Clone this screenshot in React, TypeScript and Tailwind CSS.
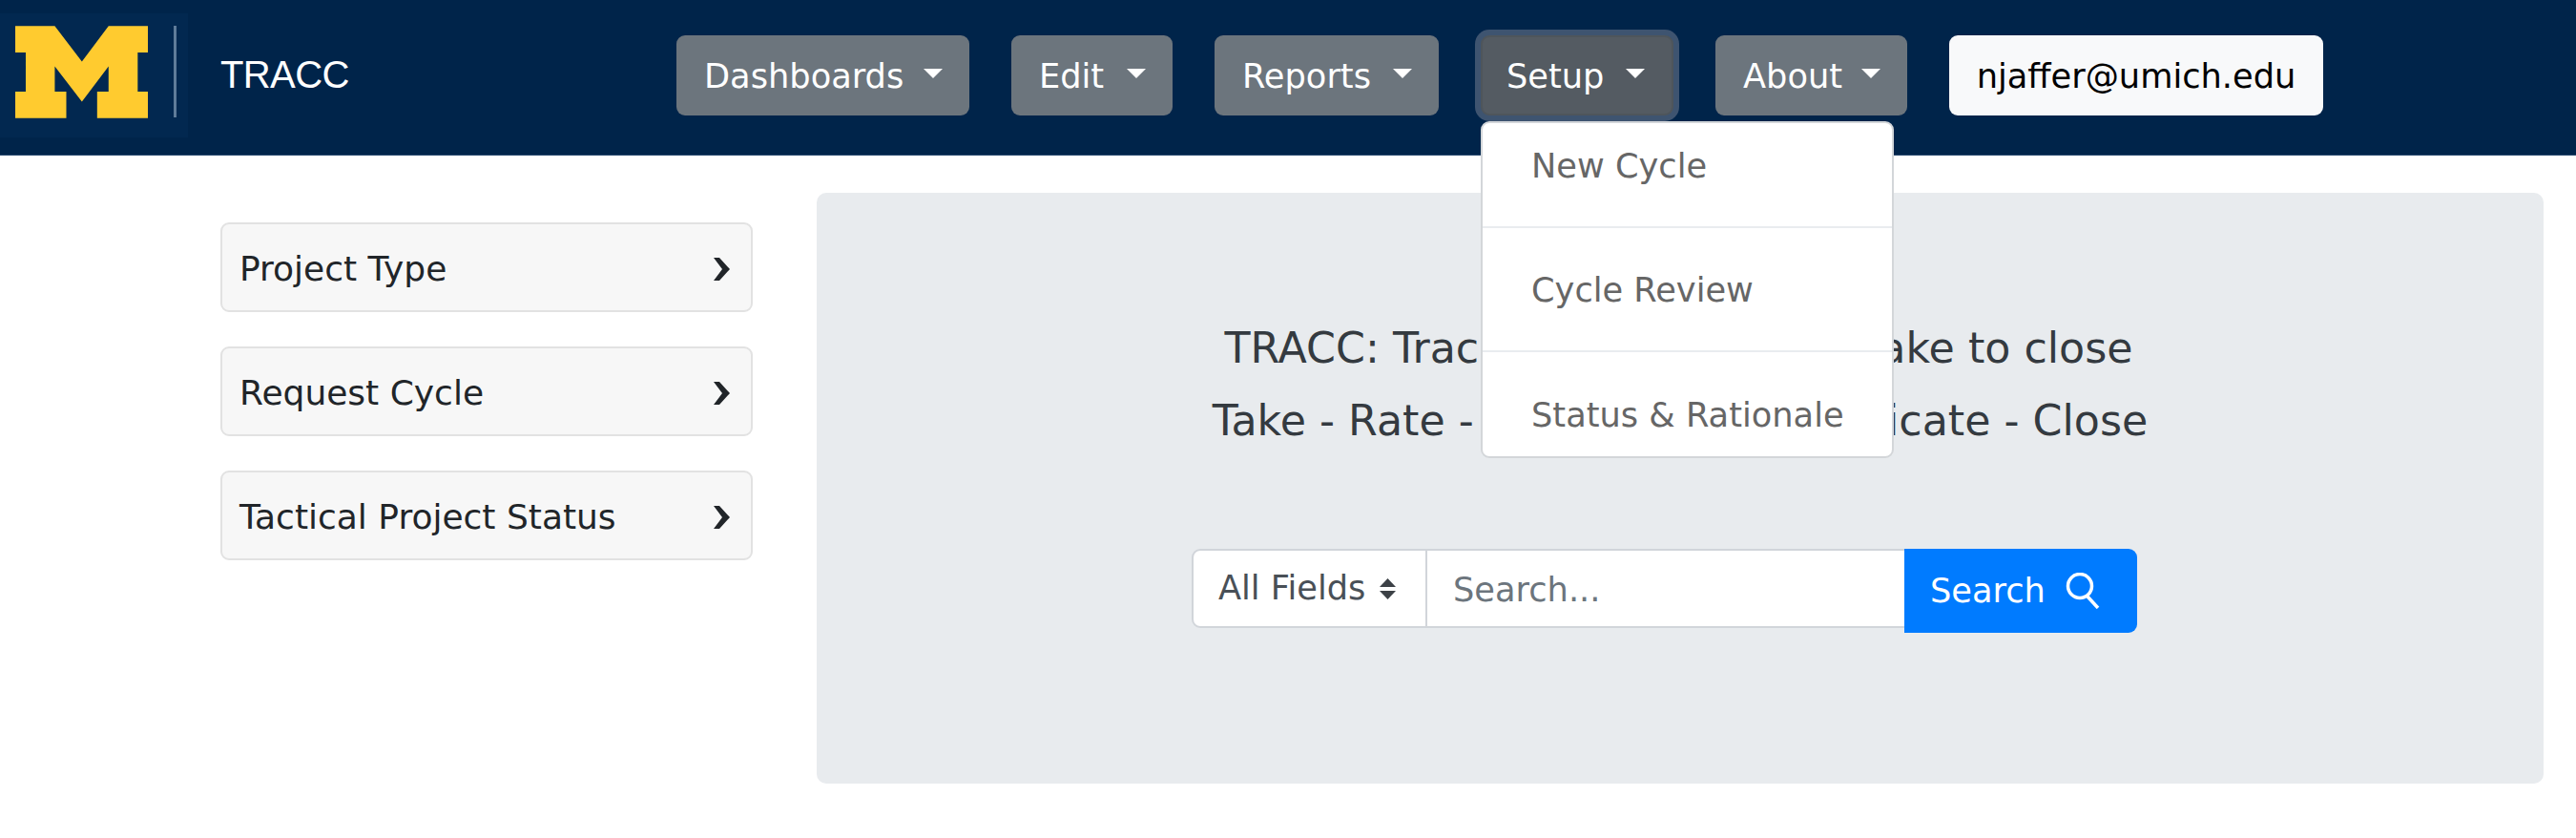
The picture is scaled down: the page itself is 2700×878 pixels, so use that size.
const font = "font-['DejaVu_Sans',sans-serif]";

const Caret = () => (
  <svg width="20" height="10" viewBox="0 0 20 10" className="mb-[7px] shrink-0">
    <polygon points="0,0 20,0 10,10" fill="currentColor" />
  </svg>
);

const NavButton = ({
  label,
  width,
  active,
}: {
  label: string;
  width: string;
  active?: boolean;
}) => (
  <div
    className={`flex items-center justify-between h-[84px] rounded-[9px] pt-[2px] pr-[28px] text-white ${width} ${
      active
        ? "pl-[25px] bg-[#545b62] border-2 border-[#4e555b] shadow-[0_0_0_6px_#3e5470]"
        : "pl-[29px] bg-[#6c757d]"
    }`}
  >
    {label}
    <Caret />
  </div>
);

const SideItem = ({ label }: { label: string }) => (
  <div className="flex items-center justify-between h-[94px] pl-[18px] pr-[22px] pt-[4px] text-[36px] bg-[#f7f7f7] border-2 border-[#e2e2e2] rounded-[9px] text-[#212529]">
    {label}
    <svg width="17" height="24" viewBox="0 0 17 24">
      <polygon points="0,0 6,0 17,12 6,24 0,24 9,12" fill="#212529" />
    </svg>
  </div>
);

export default function App() {
  return (
    <div className={`${font} text-[35.2px] min-h-[878px] bg-white`}>
      <header className="flex items-center h-[163px] pb-[4px] bg-[#00244a] border-b border-[#2a4a70]">
        <div className="flex items-start shrink-0 w-[197px] h-[130px] pl-[16px] pt-[13px] bg-[#022850]">
          <svg width="139" height="97" viewBox="0 0 139.3 96.7">
            <polygon
              points="0,0 41.5,0 70,37.3 98,0 139.3,0 139.3,27.7 128.6,27.7 128.6,69 139.3,69 139.3,96.7 86,96.7 86,69 98,69 98,42.3 70,79.3 41.5,42.3 41.5,69 53.6,69 53.6,96.7 0,96.7 0,69 11,69 11,27.7 0,27.7"
              fill="#ffcb2f"
            />
          </svg>
          <div className="ml-[27px] w-[3px] h-[96px] bg-[#5f7c99]" />
        </div>
        <div className="ml-[34px] mb-[3px] w-[478px] font-['Liberation_Sans',sans-serif] text-[40px] tracking-[-0.6px] text-white">
          TRACC
        </div>
        <nav className="flex items-center gap-[44px]">
          <NavButton label="Dashboards" width="w-[307px]" />
          <NavButton label="Edit" width="w-[169px]" />
          <NavButton label="Reports" width="w-[235px]" />
          <div className="relative">
            <NavButton label="Setup" width="w-[202px]" active />
            <div className="absolute z-10 left-0 top-[90px] w-[433px] h-[353px] bg-white border-2 border-[#d3d6d9] rounded-[9px] text-[#666666]">
              <div className="h-[108px] pl-[51px] pt-[18px] leading-[53px]">New Cycle</div>
              <div className="h-[130px] pl-[51px] pt-[38px] leading-[53px] border-t-2 border-[#e9ecef]">
                Cycle Review
              </div>
              <div className="h-[110px] pl-[51px] pt-[39px] leading-[53px] border-t-2 border-[#e9ecef]">
                Status &amp; Rationale
              </div>
            </div>
          </div>
          <NavButton label="About" width="w-[201px]" />
          <div className="flex items-center justify-center h-[84px] w-[392px] rounded-[9px] pt-[2px] bg-[#f8f9fa] text-black">
            njaffer@umich.edu
          </div>
        </nav>
      </header>

      <main className="flex items-start pl-[231px] pr-[34px] pt-[39px] gap-[67px]">
        <aside className="flex flex-col w-[558px] shrink-0 pt-[31px] gap-[36px]">
          <SideItem label="Project Type" />
          <SideItem label="Request Cycle" />
          <SideItem label="Tactical Project Status" />
        </aside>

        <section className="flex-1 h-[619px] pt-[125px] bg-[#e8ebee] rounded-[10px]">
          <div className="text-center text-[44.3px] leading-[76px] text-[#343a40]">
            <p className="pr-[3px]">TRACC: Track requests from intake to close</p>
            <p>Take - Rate - Analyze - Communicate - Close</p>
          </div>
          <div className="flex items-start ml-[393px] mt-[96px]">
            <div className="flex items-center w-[247px] h-[83px] pl-[26px] bg-white border-2 border-[#d1d5da] rounded-l-[9px] text-[#495057]">
              All Fields
              <svg width="17" height="22" viewBox="0 0 17 22" className="ml-[15px]">
                <polygon points="8.5,0 17,9 0,9" fill="#3c4146" />
                <polygon points="0,13 17,13 8.5,22" fill="#3c4146" />
              </svg>
            </div>
            <input
              className="w-[500px] h-[83px] pl-[27px] pt-[2px] bg-white border-y-2 border-r-0 border-l-0 border-[#d1d5da] outline-none placeholder:text-[#6c757d]"
              placeholder="Search..."
            />
            <div className="flex items-center h-[88px] w-[244px] pl-[27px] bg-[#007bff] rounded-r-[9px] text-white">
              Search
              <svg width="36" height="38" viewBox="0 0 36 38" className="ml-[21px]" fill="none" stroke="white" strokeWidth="3.5">
                <circle cx="15" cy="14" r="12.5" />
                <line x1="23" y1="25" x2="34" y2="37" />
              </svg>
            </div>
          </div>
        </section>
      </main>
    </div>
  );
}
